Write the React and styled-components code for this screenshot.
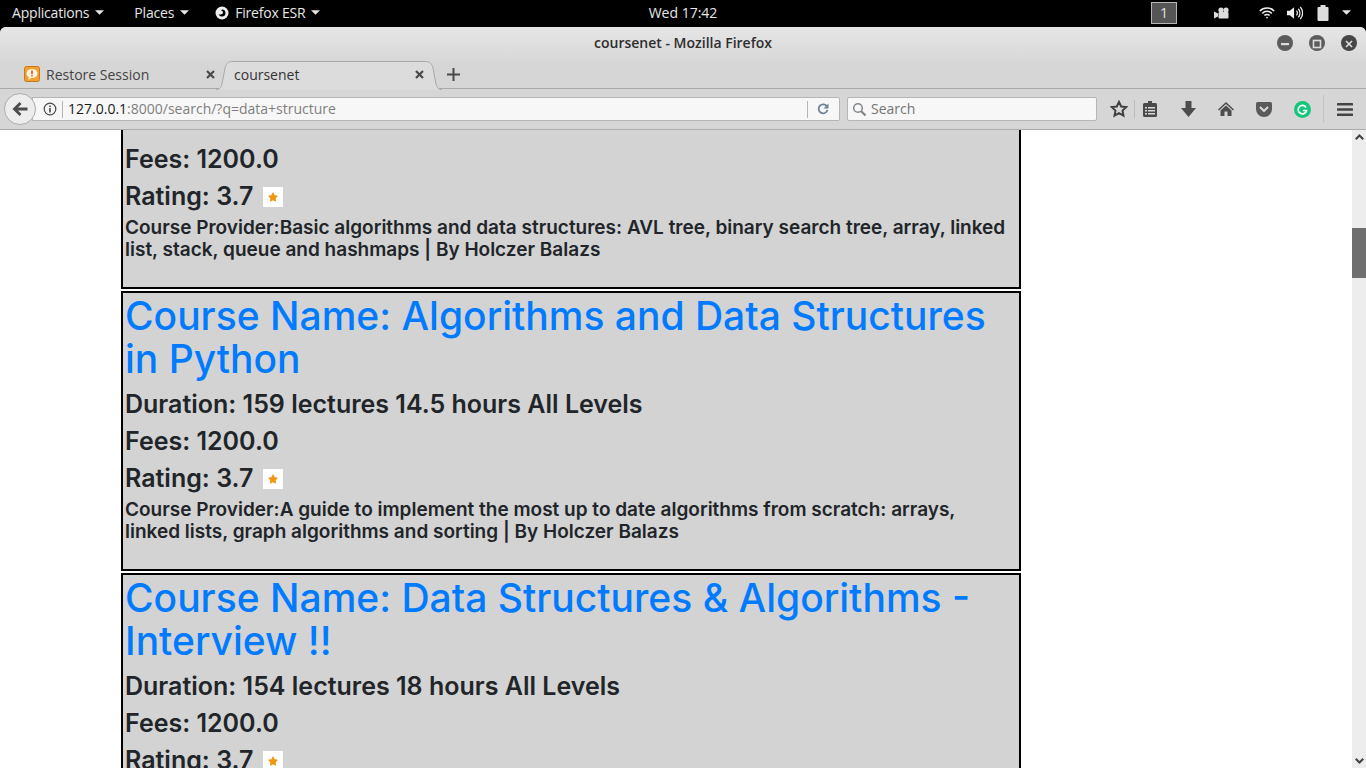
import React from 'react';
import styled, { createGlobalStyle } from 'styled-components';
import { FaStar } from 'react-icons/fa';

const courses = [
	{
		id: 1,
		clipped: true,
		fees: '1200.0',
		rating: '3.7',
		provider:
			'Basic algorithms and data structures: AVL tree, binary search tree, array, linked list, stack, queue and hashmaps | By Holczer Balazs',
	},
	{
		id: 2,
		name: 'Algorithms and Data Structures in Python',
		duration: '159 lectures 14.5 hours All Levels',
		fees: '1200.0',
		rating: '3.7',
		provider:
			'A guide to implement the most up to date algorithms from scratch: arrays, linked lists, graph algorithms and sorting | By Holczer Balazs',
	},
	{
		id: 3,
		name: 'Data Structures & Algorithms - Interview !!',
		duration: '154 lectures 18 hours All Levels',
		fees: '1200.0',
		rating: '3.7',
		provider: '',
	},
];

function Caret() {
	return (
		<CaretIcon viewBox="0 0 10 5">
			<path d="M0 0h10L5 5z" fill="currentColor" />
		</CaretIcon>
	);
}

function TopBar() {
	return (
		<Panel>
			<PanelLeft>
				<PanelMenu>
					Applications <Caret />
				</PanelMenu>
				<PanelMenu>
					Places <Caret />
				</PanelMenu>
				<PanelMenu $pull>
					<svg width="14" height="14" viewBox="0 0 14 14">
						<circle cx="7" cy="7" r="6.5" fill="#eee" />
						<path d="M7 3.5a3.5 3.5 0 1 1-3.4 4.4C5 9 8 8.5 8 6.5 8 5.5 7.5 4.5 6 4.5z" fill="#000" />
					</svg>
					Firefox ESR <Caret />
				</PanelMenu>
			</PanelLeft>
			<Clock>Wed 17:42</Clock>
			<PanelRight>
				<Workspace>1</Workspace>
				<TrayIcon $gap={37}>
					<svg width="16" height="12" viewBox="0 0 16 12" fill="#ddd">
						<circle cx="7" cy="3" r="2.6" />
						<circle cx="12" cy="3" r="2.6" />
						<rect x="4.5" y="5" width="10" height="6.5" rx="1" />
						<path d="M0 4.5l4 2v3l-4 2z" />
					</svg>
				</TrayIcon>
				<TrayIcon $gap={29}>
					<svg width="16" height="12" viewBox="0 0 16 12" fill="none" stroke="#eee" strokeWidth="1.5">
						<path d="M.8 4a10 10 0 0 1 14.4 0" />
						<path d="M3.2 6.4a6.6 6.6 0 0 1 9.6 0" />
						<path d="M5.4 8.6a3.4 3.4 0 0 1 5.2 0" />
						<circle cx="8" cy="10.6" r=".9" fill="#eee" stroke="none" />
					</svg>
				</TrayIcon>
				<TrayIcon $gap={12}>
					<svg width="16" height="16" viewBox="0 0 17 16" fill="none" stroke="#eee" strokeWidth="1.3">
						<path d="M0 5.5h3L7.5 2v12L3 10.500H0z" fill="#eee" stroke="none" />
						<path d="M10 5.500a3.500 3.500 0 0 1 0 5" />
						<path d="M12 3.500a6.500 6.500 0 0 1 0 9" />
						<path d="M14 1.500a9.500 9.500 0 0 1 0 13" />
					</svg>
				</TrayIcon>
				<TrayIcon $gap={14}>
					<svg width="12" height="16" viewBox="0 0 12 16" fill="#ddd">
						<rect x="3.500" y="0" width="5" height="2" />
						<rect x=".5" y="2" width="11" height="14" rx="1" />
					</svg>
				</TrayIcon>
				<TrayIcon $gap={13}>
					<Caret />
				</TrayIcon>
			</PanelRight>
		</Panel>
	);
}

function TitleBar() {
	return (
		<WindowTitle>
			<TitleText>coursenet - Mozilla Firefox</TitleText>
			<WindowButtons>
				<WindowButton>
					<svg width="16" height="16" viewBox="0 0 16 16">
						<rect x="4" y="7" width="8" height="2.200" fill="#ddd" />
					</svg>
				</WindowButton>
				<WindowButton>
					<svg width="16" height="16" viewBox="0 0 16 16">
						<rect x="4.500" y="4.500" width="7" height="7" fill="none" stroke="#ddd" strokeWidth="1.600" />
					</svg>
				</WindowButton>
				<WindowButton $dark>
					<svg width="16" height="16" viewBox="0 0 16 16">
						<path d="M5 5l6 6M11 5l-6 6" stroke="#ddd" strokeWidth="1.600" />
					</svg>
				</WindowButton>
			</WindowButtons>
		</WindowTitle>
	);
}

function CloseX() {
	return (
		<CloseIcon viewBox="0 0 9 9">
			<path d="M1 1l7 7M8 1L1 8" stroke="#4a4a4a" strokeWidth="2.200" />
		</CloseIcon>
	);
}

function TabStrip() {
	return (
		<Tabs>
			<Tab>
				<svg width="16" height="16" viewBox="0 0 16 16">
					<rect x="0.500" y="0.500" width="15" height="15" rx="2" fill="#f0a030" stroke="#c87a18" />
					<ellipse cx="8" cy="7.500" rx="5.500" ry="4.500" fill="#fff3dc" />
					<path d="M5 10.500L4.500 14 8 11.500z" fill="#fff3dc" />
					<rect x="7.200" y="4.500" width="1.600" height="3.500" fill="#d8562a" />
					<rect x="7.200" y="8.800" width="1.600" height="1.500" fill="#d8562a" />
				</svg>
				<TabLabel>Restore Session</TabLabel>
				<CloseX />
			</Tab>
			<ActiveTab>
				<TabCurve viewBox="0 0 226 29" preserveAspectRatio="none">
					<path
						d="M0 28.500C3 28.500 5 27 6 23L9 7C10 3 12 .5 17 .5H209C214 .5 216 3 217 7L220 23C221 27 223 28.500 226 28.500"
						fill="#dcdcdc"
						stroke="#a9a9a9"
					/>
				</TabCurve>
				<TabLabel $dark>coursenet</TabLabel>
				<CloseX />
			</ActiveTab>
			<NewTab>
				<svg width="13" height="13" viewBox="0 0 13 13">
					<path d="M6.500 0v13M0 6.500h13" stroke="#4a4a4a" strokeWidth="2" />
				</svg>
			</NewTab>
		</Tabs>
	);
}

function NavBar() {
	return (
		<Nav>
			<BackButton>
				<svg width="16" height="14" viewBox="0 0 16 14">
					<path d="M7.500 0L0.500 7l7 7 2-2L6 8.500h9.500v-3H6L9.500 2z" fill="#4d4d4d" />
				</svg>
			</BackButton>
			<UrlBar>
				<svg width="14" height="14" viewBox="0 0 14 14">
					<circle cx="7" cy="7" r="5.800" fill="none" stroke="#4a4a4a" strokeWidth="1.200" />
					<rect x="6.200" y="6" width="1.600" height="4.500" fill="#4a4a4a" />
					<rect x="6.200" y="3.500" width="1.600" height="1.600" fill="#4a4a4a" />
				</svg>
				<UrlDivider />
				<UrlText>
					<UrlHost>127.0.0.1</UrlHost>:8000/search/?q=data+structure
				</UrlText>
				<ReloadBox>
					<svg width="12" height="12" viewBox="0 0 12 12" fill="none">
						<path d="M10 3.500A4.500 4.500 0 1 0 10.500 7" stroke="#6d8296" strokeWidth="1.800" />
						<path d="M11.500 0.500v5h-5z" fill="#6d8296" />
					</svg>
				</ReloadBox>
			</UrlBar>
			<SearchBar>
				<svg width="15" height="15" viewBox="0 0 15 15" fill="none" stroke="#80868c">
					<circle cx="6" cy="6" r="4.300" strokeWidth="1.500" />
					<path d="M9.200 9.200L13.500 13.500" strokeWidth="2.200" />
				</svg>
				<SearchText>Search</SearchText>
			</SearchBar>
			<ToolIcons>
				<StarSlot>
					<svg width="18" height="18" viewBox="0 0 24 24" fill="none" stroke="#3f3f3f" strokeWidth="2.600">
						<path d="M12 2.500l2.900 6.200 6.800.8-5 4.600 1.300 6.700-6-3.300-6 3.300 1.300-6.700-5-4.600 6.800-.8z" />
					</svg>
				</StarSlot>
				<ToolSlot>
					<svg width="14" height="16" viewBox="0 0 14 16">
						<path d="M5 0h4v2h3.500a1.500 1.500 0 0 1 1.500 1.500V14.500a1.500 1.500 0 0 1-1.500 1.500h-11A1.500 1.500 0 0 1 0 14.500V3.500A1.500 1.500 0 0 1 1.500 2H5z" fill="#4a4a4a" />
						<path d="M2 6h2v1.500H2zM5 6h7v1.500H5zM2 9h2v1.500H2zM5 9h7v1.500H5zM2 12h2v1.500H2zM5 12h7v1.500H5z" fill="#d8d8d8" />
					</svg>
				</ToolSlot>
				<ToolSlot>
					<svg width="15" height="16" viewBox="0 0 15 16">
						<path d="M4.500 0h6v7H15l-7.500 9L0 7h4.500z" fill="#4d4d4d" />
					</svg>
				</ToolSlot>
				<ToolSlot>
					<svg width="16" height="14" viewBox="0 0 16 14">
						<path d="M8 0L0 7.500l1 1L8 2l7 6.500 1-1z" fill="#4d4d4d" />
						<path d="M8 3.500L2.500 8.500V14H6.500V9.500h3V14h4V8.500z" fill="#4d4d4d" />
					</svg>
				</ToolSlot>
				<ToolSlot>
					<svg width="16" height="15" viewBox="0 0 16 15">
						<path d="M1.500 0h13A1.500 1.500 0 0 1 16 1.500V7a8 8 0 0 1-16 0V1.500A1.500 1.500 0 0 1 1.500 0z" fill="#5a5a5a" />
						<path d="M4 5l4 4 4-4" fill="none" stroke="#d8d8d8" strokeWidth="2" />
					</svg>
				</ToolSlot>
				<ToolSlot>
					<svg width="17" height="17" viewBox="0 0 17 17">
						<circle cx="8.500" cy="8.500" r="8.500" fill="#12c67a" />
						<path d="M12 6.500A4.200 4.200 0 1 0 12.500 9.500H9" fill="none" stroke="#fff" strokeWidth="1.700" />
					</svg>
				</ToolSlot>
				<MenuSlot>
					<svg width="16" height="13" viewBox="0 0 16 13" fill="#444">
						<rect width="16" height="2.600" rx=".6" />
						<rect y="5.200" width="16" height="2.600" rx=".6" />
						<rect y="10.400" width="16" height="2.600" rx=".6" />
					</svg>
				</MenuSlot>
			</ToolIcons>
		</Nav>
	);
}

function CourseCard({ course }) {
	return (
		<Card $clipped={course.clipped}>
			{course.name && <CourseTitle href="#">Course Name: {course.name}</CourseTitle>}
			{course.duration && <Info>Duration: {course.duration}</Info>}
			<Info>Fees: {course.fees}</Info>
			<Info>
				Rating: {course.rating}
				<StarBox>
					<FaStar />
				</StarBox>
			</Info>
			{course.provider && <Provider>Course Provider:{course.provider}</Provider>}
		</Card>
	);
}

export default function App() {
	return (
		<>
			<GlobalStyle />
			<Screen>
				<TopBar />
				<Chrome>
					<TitleBar />
					<TabStrip />
					<NavBar />
				</Chrome>
				<Viewport>
					<Results>
						{courses.map((course) => (
							<CourseCard key={course.id} course={course} />
						))}
					</Results>
					<Scrollbar>
						<ScrollArrow viewBox="0 0 9 6">
							<path d="M4.500 0L9 4.500 7.500 6l-3-3-3 3L0 4.500z" fill="#444" />
						</ScrollArrow>
						<ScrollThumb />
						<ScrollArrowDown viewBox="0 0 9 6">
							<path d="M4.500 6L9 1.500 7.500 0l-3 3-3-3L0 1.500z" fill="#444" />
						</ScrollArrowDown>
					</Scrollbar>
				</Viewport>
			</Screen>
		</>
	);
}

const GlobalStyle = createGlobalStyle`
	html, body {
		margin: 0;
		height: 100%;
		overflow: hidden;
	}
	body {
		font-family: 'Open Sans', 'Liberation Sans', sans-serif;
	}
`;

const Screen = styled.div`
	width: 1366px;
	height: 768px;
	display: flex;
	flex-direction: column;
	overflow: hidden;
	background: #000;
`;

const Panel = styled.div`
	height: 27px;
	box-sizing: border-box;
	padding-bottom: 2px;
	background: #000;
	color: #e6e6e6;
	font-size: 14px;
	display: grid;
	grid-template-columns: 1fr auto 1fr;
	align-items: center;
	flex: none;
`;

const PanelLeft = styled.div`
	display: flex;
	align-items: center;
	padding-left: 12px;
	gap: 30px;
	letter-spacing: -0.2px;
`;

const PanelMenu = styled.div`
	display: flex;
	align-items: center;
	gap: 6px;
	${(p) => p.$pull && 'margin-left: -4px;'}
`;

const CaretIcon = styled.svg`
	width: 9px;
	height: 5px;
	color: #e6e6e6;
	display: block;
`;

const Clock = styled.div`
	text-align: center;
`;

const PanelRight = styled.div`
	display: flex;
	align-items: center;
	justify-content: flex-end;
	padding-right: 15px;
`;

const Workspace = styled.div`
	width: 26px;
	height: 22px;
	box-sizing: border-box;
	border: 1px solid #b5b5b5;
	background: #555;
	color: #ddd;
	text-align: center;
	line-height: 19px;
	font-size: 15px;
`;

const TrayIcon = styled.span`
	display: flex;
	margin-left: ${(p) => p.$gap}px;
`;

const Chrome = styled.div`
	background: #d6d6d6;
	border-top-left-radius: 6px;
	border-top-right-radius: 6px;
	flex: none;
`;

const WindowTitle = styled.div`
	height: 33px;
	box-sizing: border-box;
	padding-bottom: 2px;
	background: linear-gradient(#e6e6e6, #d8d8d8);
	border-top-left-radius: 6px;
	border-top-right-radius: 6px;
	display: flex;
	align-items: center;
	justify-content: center;
	position: relative;
`;

const TitleText = styled.div`
	font-size: 14px;
	font-weight: 600;
	color: #2e2e2e;
`;

const WindowButtons = styled.div`
	position: absolute;
	right: 9px;
	top: 8px;
	display: flex;
	gap: 16px;
`;

const WindowButton = styled.div`
	width: 16px;
	height: 16px;
	border-radius: 50%;
	background: ${(p) => (p.$dark ? '#464646' : '#5c5c5c')};
`;

const Tabs = styled.div`
	height: 29px;
	display: flex;
	align-items: center;
	padding-left: 24px;
	border-bottom: 1px solid #a9a9a9;
	box-sizing: border-box;
`;

const Tab = styled.div`
	width: 191px;
	display: flex;
	align-items: center;
	gap: 6px;
	font-size: 14px;
	color: #3c3c3c;
	flex: none;
`;

const ActiveTab = styled.div`
	width: 226px;
	height: 29px;
	margin-left: 1px;
	box-sizing: border-box;
	padding: 0 18px 1px 18px;
	display: flex;
	align-items: center;
	position: relative;
	font-size: 14px;
	flex: none;
	top: 1px;
`;

const TabCurve = styled.svg`
	position: absolute;
	inset: 0;
	width: 100%;
	height: 100%;
`;

const TabLabel = styled.div`
	flex: 1;
	position: relative;
	color: ${(p) => (p.$dark ? '#333' : '#444')};
`;

const CloseIcon = styled.svg`
	width: 9px;
	height: 9px;
	position: relative;
	flex: none;
`;

const NewTab = styled.div`
	display: flex;
	margin-left: 5px;
`;

const Nav = styled.div`
	height: 41px;
	box-sizing: border-box;
	display: flex;
	align-items: center;
	padding-left: 4px;
	border-bottom: 1px solid #ababab;
`;

const BackButton = styled.div`
	width: 32px;
	height: 32px;
	box-sizing: border-box;
	border: 1px solid #ababab;
	border-radius: 50%;
	background: #ededed;
	display: flex;
	align-items: center;
	justify-content: center;
	position: relative;
	z-index: 1;
	flex: none;
`;

const UrlBar = styled.div`
	width: 808px;
	height: 24px;
	margin-left: -4px;
	box-sizing: border-box;
	border: 1px solid #b5b5b5;
	border-radius: 0 2px 2px 0;
	background: #f7f7f7;
	display: flex;
	align-items: center;
	padding-left: 10px;
	font-size: 14px;
	flex: none;
`;

const UrlDivider = styled.div`
	width: 1px;
	height: 17px;
	background: #b5b5b5;
	margin: 0 5px;
`;

const UrlText = styled.div`
	flex: 1;
	color: #7f7f7f;
	padding-bottom: 2px;
`;

const UrlHost = styled.span`
	color: #1a1a1a;
`;

const ReloadBox = styled.div`
	width: 32px;
	height: 17px;
	border-left: 1px solid #b5b5b5;
	display: flex;
	align-items: center;
	justify-content: center;
	padding-right: 2px;
	box-sizing: border-box;
`;

const SearchBar = styled.div`
	width: 250px;
	height: 24px;
	margin-left: 7px;
	box-sizing: border-box;
	border: 1px solid #b5b5b5;
	border-radius: 2px;
	background: #f7f7f7;
	display: flex;
	align-items: center;
	padding-left: 4px;
	gap: 4px;
	flex: none;
`;

const SearchText = styled.div`
	font-size: 14px;
	color: #757575;
	padding-bottom: 2px;
`;

const ToolIcons = styled.div`
	display: flex;
	align-items: center;
	flex: 1;
	height: 100%;
`;

const ToolSlot = styled.div`
	width: 38px;
	display: flex;
	justify-content: center;
`;

const StarSlot = styled.div`
	width: 30px;
	height: 18px;
	padding-left: 7px;
	margin-right: -4px;
	display: flex;
	justify-content: center;
	border-right: 1px solid #bcbcbc;
	flex: none;
`;

const MenuSlot = styled.div`
	flex: 1;
	height: 28px;
	margin-left: 2px;
	display: flex;
	align-items: center;
	justify-content: center;
	border-left: 1px solid #c4c4c4;
`;

const Viewport = styled.div`
	flex: 1;
	min-height: 0;
	display: flex;
	overflow: hidden;
	background: #fff;
`;

const Results = styled.div`
	flex: 1;
	padding-left: 121px;
	display: flex;
	flex-direction: column;
	gap: 2px;
`;

const Card = styled.div`
	width: 900px;
	box-sizing: border-box;
	flex: none;
	background: #d3d3d3;
	border: 2px solid #000;
	padding: 1px 2px 26px;
	color: #212529;
	font-family: Inter, 'Noto Sans', sans-serif;
	${(p) => p.$clipped && 'border-top: none; padding-top: 11px;'}
`;

const CourseTitle = styled.a`
	display: block;
	color: #007bff;
	text-decoration: none;
	font-size: 39px;
	font-weight: 500;
	line-height: 43px;
	margin-bottom: 6px;
`;

const Info = styled.div`
	font-size: 25px;
	font-weight: 600;
	line-height: 37px;
	display: flex;
	align-items: center;
`;

const StarBox = styled.span`
	width: 20px;
	height: 20px;
	background: #fff;
	color: #f0960f;
	font-size: 10px;
	display: inline-flex;
	align-items: center;
	justify-content: center;
	margin-left: 10px;
`;

const Provider = styled.div`
	font-size: 19px;
	font-weight: 600;
	line-height: 22px;
	margin-top: 2px;
	max-width: 885px;
`;

const Scrollbar = styled.div`
	width: 14px;
	background: #ededed;
	position: relative;
	flex: none;
`;

const ScrollArrow = styled.svg`
	position: absolute;
	left: 3px;
	top: 4px;
	width: 9px;
	height: 6px;
`;

const ScrollArrowDown = styled(ScrollArrow)`
	top: auto;
	bottom: 4px;
`;

const ScrollThumb = styled.div`
	position: absolute;
	top: 98px;
	left: 0;
	right: 0;
	height: 50px;
	background: #6e6e6e;
`;
